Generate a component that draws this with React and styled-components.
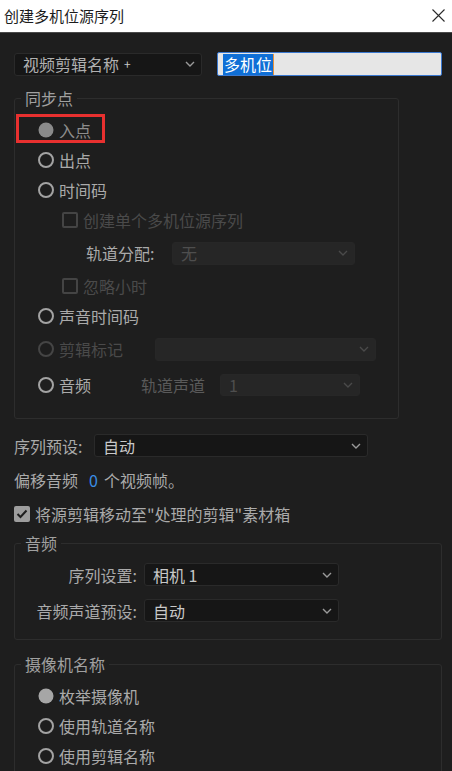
import styled, { createGlobalStyle } from "styled-components";

const GlobalStyle = createGlobalStyle`
  html, body {
    margin: 0;
    padding: 0;
    background: #1e1e1e;
  }
  * {
    box-sizing: border-box;
  }
`;

const font = `"Noto Sans CJK SC", "Noto Sans", sans-serif`;

const Window = styled.div`
  width: 452px;
  height: 771px;
  overflow: hidden;
  background: #1e1e1e;
  font-family: ${font};
  font-size: 16px;
  color: #aaaaaa;
`;

const TitleBar = styled.div`
  height: 33px;
  background: #fff;
  border-bottom: 1px solid #4a4a4a;
  display: flex;
  align-items: center;
  justify-content: space-between;
  padding: 0 6px 0 4px;
`;

const TitleText = styled.div`
  font-size: 15px;
  color: #1c1c1c;
  line-height: 1;
  margin-top: -1px;
`;

const CloseButton = styled.div`
  width: 16px;
  height: 16px;
  display: flex;
  align-items: center;
  justify-content: center;
  margin-top: -1px;
`;

const Body = styled.div`
  padding: 19px 10px 0 14px;
  display: flex;
  flex-direction: column;
  align-items: flex-start;
`;

const TopRow = styled.div`
  display: flex;
  align-items: center;
  gap: 15px;
  height: 24px;
`;

const SelectBox = styled.div`
  position: relative;
  width: ${(p) => p.$width}px;
  height: ${(p) => p.$height || 23}px;
  border-radius: 3px;
  background: ${(p) => (p.$disabled ? "#262626" : "#161616")};
  border: 1px solid ${(p) => (p.$disabled ? "#272727" : "#2a2a2a")};
  display: flex;
  align-items: center;
  padding-left: 8px;
  color: ${(p) => (p.$disabled ? "#4e4e4e" : "#c8c8c8")};
  font-size: 16px;
  line-height: 1;
  white-space: nowrap;
`;

const Chevron = styled.svg`
  position: absolute;
  right: 6px;
  top: 50%;
  margin-top: -3px;
`;

const Small = styled.span`
  font-size: 12px;
  margin-left: 5px;
`;

const TextInput = styled.div`
  width: 225px;
  height: 24px;
  background: #e6e6e6;
  border: 1px solid #3a78cf;
  border-radius: 2px;
  display: flex;
  align-items: center;
  padding-left: 5px;
`;

const Highlight = styled.span`
  background: #0f6fd6;
  color: #fff;
  font-size: 16px;
  line-height: 21px;
  height: 21px;
  padding: 0 1px;
  border-right: 1px solid #e8923a;
`;

const Group = styled.fieldset`
  margin: ${(p) => p.$mt || 0}px 0 0 0;
  width: ${(p) => p.$width}px;
  padding: ${(p) => p.$pt || 0}px 0 ${(p) => p.$pb || 0}px 0;
  border: 1px solid #2d2d2d;
  border-radius: 3px;
  min-width: 0;
`;

const Legend = styled.legend`
  margin-left: 6px;
  padding: 0 4px;
  font-size: 16px;
  line-height: 22px;
  color: #a0a0a0;
`;

const Row = styled.div`
  position: relative;
  display: flex;
  align-items: center;
  height: ${(p) => p.$h || 30}px;
  padding-left: ${(p) => (p.$indent === undefined ? 23 : p.$indent)}px;
  line-height: 1;
`;

const Radio = styled.span`
  width: 16px;
  height: 16px;
  border-radius: 50%;
  flex-shrink: 0;
  margin-right: 5px;
  ${(p) =>
    p.$checked
      ? `background: ${p.$dim ? "#8a8a8a" : "#a6a6a6"}; transform: scale(0.94);`
      : `border: 2.5px solid ${p.$disabled ? "#454545" : "#a3a3a3"};`}
`;

const Check = styled.span`
  width: 16px;
  height: 16px;
  border-radius: 2px;
  flex-shrink: 0;
  margin-right: 5px;
  display: flex;
  align-items: center;
  justify-content: center;
  ${(p) =>
    p.$checked
      ? `background: #9d9d9d;`
      : `border: 2px solid ${p.$disabled ? "#444444" : "#a8a8a8"};`}
`;

const Text = styled.span`
  color: ${(p) => (p.$disabled ? "#4a4a4a" : p.$dim ? "#8e8e8e" : "#aaaaaa")};
  width: ${(p) => (p.$width ? `${p.$width}px` : "auto")};
  text-align: ${(p) => p.$align || "left"};
  padding-right: ${(p) => p.$pr || 0}px;
  flex-shrink: 0;
  white-space: nowrap;
`;

const Blue = styled.span`
  color: #3a8ee6;
  margin: 0 6px 0 11px;
`;

const Mark = styled.div`
  position: absolute;
  left: 1px;
  top: -1px;
  width: 89px;
  height: 29px;
  border: 3.5px solid #e8302f;
  pointer-events: none;
`;

const Line = styled.div`
  display: flex;
  align-items: center;
  height: ${(p) => p.$h}px;
  margin-top: ${(p) => p.$mt}px;
  line-height: 1;
`;

const FormGrid = styled.div`
  display: grid;
  grid-template-columns: 129px auto;
  row-gap: 13px;
  align-items: center;
  line-height: 1;
`;

function ChevronIcon({ color = "#9a9a9a" }) {
  return (
    <Chevron width="10" height="6" viewBox="0 0 10 6">
      <path d="M1 1 L5 5 L9 1" fill="none" stroke={color} strokeWidth="1.4" />
    </Chevron>
  );
}

function Select({ width, height, disabled, children }) {
  return (
    <SelectBox $width={width} $height={height} $disabled={disabled}>
      {children}
      <ChevronIcon color={disabled ? "#4a4a4a" : "#9a9a9a"} />
    </SelectBox>
  );
}

function CheckMark() {
  return (
    <svg width="12" height="10" viewBox="0 0 12 10">
      <path d="M1.5 5 L4.5 8 L10.5 1.5" fill="none" stroke="#1e1e1e" strokeWidth="2" />
    </svg>
  );
}

export default function App() {
  return (
    <>
      <GlobalStyle />
      <Window>
        <TitleBar>
          <TitleText>创建多机位源序列</TitleText>
          <CloseButton>
            <svg width="13" height="13" viewBox="0 0 13 13">
              <path d="M0.5 0.5 L12.5 12.5 M12.5 0.5 L0.5 12.5" stroke="#2a2a2a" strokeWidth="1.1" />
            </svg>
          </CloseButton>
        </TitleBar>
        <Body>
          <TopRow>
            <Select width={188}>
              <span style={{ color: "#b0b0b0" }}>视频剪辑名称</span>
              <Small>+</Small>
            </Select>
            <TextInput>
              <Highlight>多机位</Highlight>
            </TextInput>
          </TopRow>

          <Group $width={385} $mt={11} $pt={6} $pb={15}>
            <Legend>同步点</Legend>
            <Row>
              <Mark />
              <Radio $checked $dim />
              <Text $dim>入点</Text>
            </Row>
            <Row>
              <Radio />
              <Text>出点</Text>
            </Row>
            <Row>
              <Radio />
              <Text>时间码</Text>
            </Row>
            <Row $indent={47}>
              <Check $disabled />
              <Text $disabled>创建单个多机位源序列</Text>
            </Row>
            <Row $indent={71} $h={36}>
              <Text $width={86}>轨道分配:</Text>
              <Select width={183} disabled>无</Select>
            </Row>
            <Row $indent={47}>
              <Check $disabled />
              <Text $disabled>忽略小时</Text>
            </Row>
            <Row>
              <Radio />
              <Text>声音时间码</Text>
            </Row>
            <Row $h={36}>
              <Radio $disabled />
              <Text $disabled $width={96}>剪辑标记</Text>
              <Select width={221} disabled />
            </Row>
            <Row $h={36}>
              <Radio />
              <Text $width={82}>音频</Text>
              <Text $disabled $width={79} style={{ color: "#5a5a5a" }}>轨道声道</Text>
              <Select width={140} height={22} disabled>1</Select>
            </Row>
          </Group>

          <Line $h={23} $mt={15}>
            <Text $width={80}>序列预设:</Text>
            <Select width={274}>自动</Select>
          </Line>

          <Line $h={24} $mt={11}>
            <Text>偏移音频</Text>
            <Blue>0</Blue>
            <Text>个视频帧。</Text>
          </Line>

          <Line $h={22} $mt={11}>
            <Check $checked>
              <CheckMark />
            </Check>
            <Text>将源剪辑移动至"处理的剪辑"素材箱</Text>
          </Line>

          <Group $width={428} $mt={7} $pt={9} $pb={17}>
            <Legend>音频</Legend>
            <FormGrid>
              <Text $align="right" $pr={7}>序列设置:</Text>
              <Select width={195}>相机 1</Select>
              <Text $align="right" $pr={7}>音频声道预设:</Text>
              <Select width={195}>自动</Select>
            </FormGrid>
          </Group>

          <Group $width={428} $mt={13} $pt={6} $pb={20}>
            <Legend>摄像机名称</Legend>
            <Row>
              <Radio $checked />
              <Text>枚举摄像机</Text>
            </Row>
            <Row>
              <Radio />
              <Text>使用轨道名称</Text>
            </Row>
            <Row>
              <Radio />
              <Text>使用剪辑名称</Text>
            </Row>
          </Group>
        </Body>
      </Window>
    </>
  );
}
